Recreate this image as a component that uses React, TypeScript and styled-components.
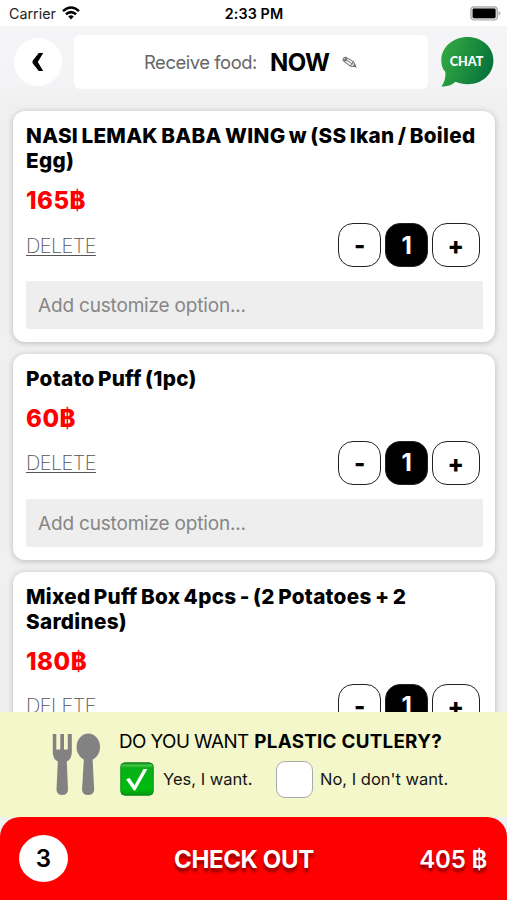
import React from "react";
import styled, { createGlobalStyle, css } from "styled-components";

const GlobalStyle = createGlobalStyle`
  * { box-sizing: border-box; }
  body { margin: 0; background: #f0f0f0; }
  button, input { font: inherit; color: inherit; }
`;

const Screen = styled.div`
  width: 507px;
  height: 900px;
  display: flex;
  flex-direction: column;
  overflow: hidden;
  background: #f0f0f0;
  color: #000;
  font-family: Inter, "Liberation Sans", sans-serif;
`;

const StatusBar = styled.header`
  flex: none;
  display: grid;
  grid-template-columns: 1fr auto 1fr;
  align-items: center;
  height: 26px;
  padding: 2px 6px 0 9px;
  background: #fff;
  font-size: 14.3px;
  line-height: 24px;
`;

const Carrier = styled.div`
  display: flex;
  align-items: center;
  gap: 6px;
  color: #222;
  svg { margin-top: -2px; }
`;

const Clock = styled.div`
  padding-right: 2px;
  font-weight: 600;
  letter-spacing: 0.1px;
`;

const BatterySlot = styled.div`
  display: flex;
  justify-content: flex-end;
  svg { margin-top: -2px; }
`;

const TopBar = styled.nav`
  flex: none;
  display: flex;
  align-items: center;
  height: 73px;
  padding: 0 13px 1px 14px;
  background: linear-gradient(#f5f5f8, #f4f4f7 75%, #f1f1f2);
`;

const BackButton = styled.button`
  display: grid;
  place-items: center;
  width: 48px;
  height: 48px;
  padding: 0;
  border: 0;
  border-radius: 50%;
  background: #fff;
`;

const ReceivePanel = styled.div`
  display: flex;
  align-items: center;
  width: 354px;
  height: 54px;
  margin: 0 13px 0 12px;
  padding-left: 70px;
  border-radius: 6px;
  background: #fff;
  white-space: nowrap;
`;

const ReceiveLabel = styled.span`
  width: 126px;
  color: #666;
  font-size: 18.4px;
  letter-spacing: -0.45px;
`;

const ReceiveTime = styled.strong`
  width: 72px;
  font-size: 24px;
  font-weight: 700;
  letter-spacing: -0.6px;
`;

const ItemList = styled.main`
  flex: 1;
  min-height: 0;
  overflow: hidden;
  display: flex;
  flex-direction: column;
  gap: 12px;
  padding: 12px 12px 0 13px;
`;

const Card = styled.article`
  flex: none;
  padding: 12px 12px 12.7px 13px;
  border-radius: 12px;
  background: #fff;
  box-shadow: 0 1px 6px rgba(0, 0, 0, 0.23);
`;

const Title = styled.h2`
  margin: 0;
  font-size: 20.7px;
  font-weight: 800;
  letter-spacing: 0.3px;
  word-spacing: -1.5px;
  line-height: 25px;
`;

const Price = styled.div`
  height: 50px;
  padding-top: 3px;
  color: #f00;
  font-size: 24px;
  font-weight: 800;
  letter-spacing: 0.5px;
  line-height: 49px;
`;

const Actions = styled.div`
  display: flex;
  align-items: center;
  justify-content: space-between;
  height: 44px;
  padding-right: 3.2px;
`;

const DeleteLink = styled.button`
  padding: 1px 0 0;
  border: 0;
  background: none;
  color: #555;
  font-size: 20px;
  font-weight: 200;
  letter-spacing: -0.6px;
  text-decoration: underline;
  text-decoration-thickness: 1px;
  text-underline-offset: 2px;
`;

const Stepper = styled.div`
  display: flex;
  gap: 3.5px;
`;

const stepCell = css`
  display: grid;
  place-items: center;
  height: 44px;
  padding: 0;
  border: 1.4px solid #222;
  border-radius: 15px;
  font-size: 24px;
  font-weight: 800;
`;

const StepButton = styled.button<{ $wide?: boolean }>`
  ${stepCell}
  width: ${(p) => (p.$wide ? 48 : 43.5)}px;
  padding-top: 1px;
  background: #fff;
`;

const Quantity = styled.span`
  ${stepCell}
  width: 43.5px;
  background: #000;
  color: #fff;
  font-weight: 700;
`;

const OptionInput = styled.input`
  display: block;
  width: 457px;
  height: 48px;
  margin-top: 14.3px;
  padding: 1px 12px 0;
  border: 0;
  border-radius: 2px;
  background: #eee;
  font-size: 19px;
  letter-spacing: -0.18px;
  &::placeholder { color: #868686; opacity: 1; }
`;

const CutleryBar = styled.section`
  flex: none;
  display: flex;
  height: 105px;
  padding: 19px 0 0 52px;
  background: #f3f7ca;
`;

const CutleryBody = styled.div`
  margin-left: 19px;
`;

const Question = styled.div`
  height: 22px;
  font-size: 18.8px;
  line-height: 22px;
  letter-spacing: -0.55px;
  white-space: nowrap;
  strong {
    margin-left: 1px;
    font-weight: 700;
    letter-spacing: 0.28px;
  }
`;

const Choices = styled.div`
  display: flex;
  align-items: center;
  height: 38px;
  margin-top: 7px;
  padding-left: 1px;
`;

const Choice = styled.label<{ $width: number; $gap: number }>`
  display: flex;
  align-items: center;
  gap: ${(p) => p.$gap}px;
  width: ${(p) => p.$width}px;
  font-size: 16.5px;
  color: #151515;
  white-space: nowrap;
`;

const EmptyBox = styled.span`
  width: 37px;
  height: 37px;
  border: 1.4px solid #aaa;
  border-radius: 9px;
  background: #fff;
`;

const CheckoutBar = styled.footer`
  flex: none;
  display: grid;
  grid-template-columns: 155px 1fr auto;
  align-items: center;
  height: 83px;
  padding: 0 20px 0 19px;
  border-radius: 20px 20px 0 0;
  background: #f00;
`;

const ItemCount = styled.span`
  display: grid;
  place-items: center;
  width: 49px;
  height: 47px;
  border-radius: 50%;
  background: #fff;
  font-size: 24px;
  font-weight: 600;
`;

const CheckoutText = styled.span<{ $end?: boolean }>`
  justify-self: ${(p) => (p.$end ? "end" : "start")};
  padding-top: 1px;
  color: #fff;
  font-size: 24px;
  font-weight: ${(p) => (p.$end ? 600 : 650)};
  letter-spacing: ${(p) => (p.$end ? -0.2 : -0.35)}px;
  text-shadow: 0 4px 3px rgba(0, 0, 0, 0.45);
`;

const WifiIcon = () => (
  <svg width="18" height="14" viewBox="0 0 18 14" fill="none" stroke="#000" strokeWidth="2.5">
    <path d="M1 5.1Q9-2 17 5.1" />
    <path d="M3.9 8.3Q9 3.9 14.1 8.3" />
    <path d="M6.2 10.4Q9 8 11.8 10.4L9 13.4Z" fill="#000" stroke="none" />
  </svg>
);

const BatteryIcon = () => (
  <svg width="31" height="15" viewBox="0 0 31 15">
    <rect x="0.8" y="0.8" width="26.6" height="13.2" rx="3.2" fill="#ddd" stroke="#aaa" strokeWidth="1.2" />
    <rect x="2.6" y="2.6" width="23" height="9.6" rx="1.4" />
    <path d="M28.6 5Q30.4 6 30.4 7.4T28.6 9.8Z" fill="#aaa" />
  </svg>
);

const BackIcon = () => (
  <svg width="12" height="18" viewBox="0 0 12 18">
    <path d="M6.8 0H11.2L5.8 9L11.2 18H6.8L.8 10.4Q0 9 .8 7.6Z" />
  </svg>
);

const PencilIcon = () => (
  <svg width="15" height="13" viewBox="0 0 17 14" fill="none" stroke="#777" strokeWidth="1.2">
    <path d="M1.2 4.8Q1 1.2 4.4 1L13.2 6.3L15.4 11.7L9.7 11.2L1.2 4.8Z" />
    <path d="M1.5 4.6Q4.2 4.5 4.4 1.2M2.8 5.6Q5.2 5.1 5.8 2M4.2 3.8L12 8.8M9.7 11.2Q10 8.8 12 8.8Q11.4 7 13.2 6.3" />
    <path d="M13.2 10.6L15.4 11.7L14.5 9.6Z" fill="#333" />
  </svg>
);

const ChatBubble = styled.svg`
  display: block;
  width: 53px;
  height: 52px;
  text {
    font: 900 12.6px Lato, sans-serif;
    fill: #fff;
  }
`;

const ChatIcon = () => (
  <ChatBubble viewBox="0 0 53 52">
    <defs>
      <linearGradient id="chatGreen" x1="0" y1="0.25" x2="1" y2="0.6">
        <stop offset="0.1" stopColor="#2fa441" />
        <stop offset="0.65" stopColor="#16873d" />
        <stop offset="1" stopColor="#05703b" />
      </linearGradient>
    </defs>
    <path
      fill="url(#chatGreen)"
      d="M26.5 1C41 1 52.4 11 52.4 24.5C52.4 38 41 48.2 27 48.2C22 48.2 18 47.4 14.5 45.8Q9.5 50.6 .4 50.8Q4.9 44 4.4 36Q.3 32 .3 24.5C.3 11 12 1 26.5 1Z"
    />
    <text x="25.6" y="29.9" textAnchor="middle">CHAT</text>
  </ChatBubble>
);

const CutleryIcon = () => (
  <svg width="48" height="65" viewBox="0 0 48 65" fill="#828282">
    <path d="M.8 3H4.3V18.5H8.3V3H12V18.5H15.8V3H19.8V21Q19.8 28 14.8 30.5L16 59Q15.5 64 10.3 64Q5 64 4.5 59L5.8 30.5Q.8 28 .8 21Z" />
    <ellipse cx="36.3" cy="16" rx="11.7" ry="13.5" />
    <path d="M32 26H40.5L42.2 59Q41.5 64 36 64Q30.7 64 30 59Z" />
  </svg>
);

const CheckedIcon = () => (
  <svg width="34" height="34" viewBox="0 0 34 34">
    <defs>
      <linearGradient id="checkGreen" x2="0" y2="1">
        <stop stopColor="#087b17" />
        <stop offset="0.07" stopColor="#4ac64b" />
        <stop offset="0.16" stopColor="#08af18" />
        <stop offset="0.8" stopColor="#00bd0d" />
        <stop offset="1" stopColor="#079713" />
      </linearGradient>
    </defs>
    <rect x="0.8" y="0.8" width="32.4" height="32.4" rx="4" fill="url(#checkGreen)" stroke="#078c17" strokeWidth="1" />
    <path d="M6 17.2L9.5 16L14.5 23.2L23.5 7H27.4L15.3 28.5H13.8Z" fill="#fff" />
  </svg>
);

const items = [
  { name: "NASI LEMAK BABA WING w (SS Ikan / Boiled Egg)", price: "165฿" },
  { name: "Potato Puff (1pc)", price: "60฿" },
  { name: "Mixed Puff Box 4pcs - (2 Potatoes + 2 Sardines)", price: "180฿" },
];

const CartItem = ({ name, price }: { name: string; price: string }) => (
  <Card>
    <Title>{name}</Title>
    <Price>{price}</Price>
    <Actions>
      <DeleteLink>DELETE</DeleteLink>
      <Stepper>
        <StepButton>-</StepButton>
        <Quantity>1</Quantity>
        <StepButton $wide>+</StepButton>
      </Stepper>
    </Actions>
    <OptionInput placeholder="Add customize option..." />
  </Card>
);

export default function App() {
  return (
    <>
      <GlobalStyle />
      <Screen>
        <StatusBar>
          <Carrier>Carrier <WifiIcon /></Carrier>
          <Clock>2:33 PM</Clock>
          <BatterySlot><BatteryIcon /></BatterySlot>
        </StatusBar>
        <TopBar>
          <BackButton aria-label="Back"><BackIcon /></BackButton>
          <ReceivePanel>
            <ReceiveLabel>Receive food:</ReceiveLabel>
            <ReceiveTime>NOW</ReceiveTime>
            <PencilIcon />
          </ReceivePanel>
          <ChatIcon />
        </TopBar>
        <ItemList>
          {items.map((item) => <CartItem key={item.name} {...item} />)}
        </ItemList>
        <CutleryBar>
          <CutleryIcon />
          <CutleryBody>
            <Question>DO YOU WANT <strong>PLASTIC CUTLERY?</strong></Question>
            <Choices>
              <Choice $width={156} $gap={9}><CheckedIcon />Yes, I want.</Choice>
              <Choice $width={175} $gap={7}><EmptyBox />No, I don't want.</Choice>
            </Choices>
          </CutleryBody>
        </CutleryBar>
        <CheckoutBar>
          <ItemCount>3</ItemCount>
          <CheckoutText>CHECK OUT</CheckoutText>
          <CheckoutText $end>405 ฿</CheckoutText>
        </CheckoutBar>
      </Screen>
    </>
  );
}
